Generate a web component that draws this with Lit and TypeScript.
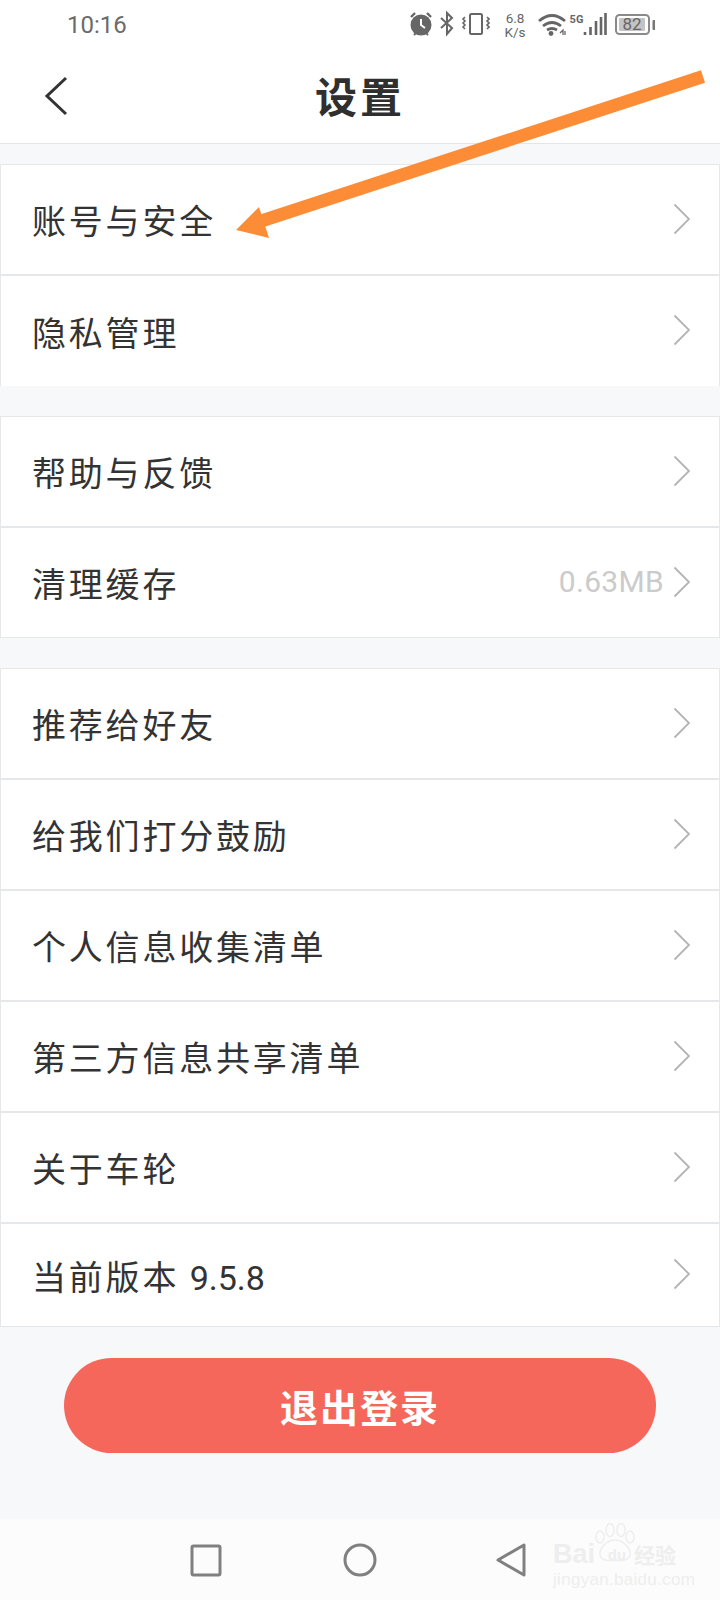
import { LitElement, html, css } from "lit";
import { customElement } from "lit/decorators.js";

const grupos = [
  [{ titulo: "账号与安全" }, { titulo: "隐私管理" }],
  [{ titulo: "帮助与反馈" }, { titulo: "清理缓存", valor: "0.63MB" }],
  [
    { titulo: "推荐给好友" },
    { titulo: "给我们打分鼓励" },
    { titulo: "个人信息收集清单" },
    { titulo: "第三方信息共享清单" },
    { titulo: "关于车轮" },
    { titulo: "当前版本 ", version: "9.5.8" },
  ],
];

@customElement("app-root")
export class AppRoot extends LitElement {
  static styles = css`
    :host {
      display: block;
      position: relative;
      width: 720px;
      height: 1600px;
      overflow: hidden;
      background: #f7f8fa;
      font-family: "Noto Sans CJK SC", "Liberation Sans", sans-serif;
      color: #333;
    }
    .barra-estado {
      height: 50px;
      background: #fff;
      display: flex;
      align-items: center;
      padding: 0 65px 0 67px;
      color: #6a6a6a;
    }
    .hora {
      flex: 1;
      font: 400 24px Roboto, sans-serif;
    }
    .barra-estado svg {
      display: block;
    }
    .velocidad {
      width: 22px;
      margin: 0 12px 0 14px;
      display: flex;
      flex-direction: column;
      align-items: center;
      gap: 1px;
      font: 400 13.500px/13px Roboto, sans-serif;
      color: #666;
    }
    .velocidad span {
      display: block;
      height: 13px;
    }
    .encabezado {
      height: 94px;
      box-sizing: border-box;
      background: #fff;
      border-bottom: 1px solid #e4e5e7;
      display: flex;
      align-items: center;
      justify-content: center;
      position: relative;
      padding-bottom: 4px;
    }
    .encabezado h1 {
      margin: 0;
      font-size: 42px;
      line-height: 60px;
      font-weight: 700;
      letter-spacing: 3px;
      color: #2f2f2f;
    }
    .atras {
      position: absolute;
      left: 44px;
      top: 26px;
    }
    .grupos {
      display: flex;
      flex-direction: column;
      gap: 30px;
      padding-top: 20px;
    }
    .grupo {
      background: #fff;
      border: 1px solid #e6e7e9;
      border-bottom: 0;
    }
    .grupo.con-fondo {
      border-bottom: 1px solid #e6e7e9;
    }
    .fila {
      height: 111px;
      box-sizing: border-box;
      display: flex;
      align-items: center;
      padding: 0 28px 0 31px;
      border-bottom: 2px solid #e6e7e9;
    }
    .fila:last-child {
      height: 110px;
      border-bottom: 0;
    }
    .grupo:nth-child(2) .fila:last-child {
      height: 109px;
    }
    .grupo:nth-child(3) .fila:last-child {
      height: 102px;
    }
    .fila svg {
      margin-bottom: 2px;
    }
    .titulo {
      flex: 1;
      font-size: 34px;
      letter-spacing: 2.800px;
      color: #333;
    }
    .version {
      font: 400 34px Roboto, sans-serif;
      letter-spacing: 0;
    }
    .valor {
      font: 400 30px Roboto, sans-serif;
      letter-spacing: 0.300px;
      color: #cbcbcb;
      margin-right: 9px;
      margin-bottom: 2px;
    }
    .salir {
      display: block;
      box-sizing: border-box;
      width: 592px;
      height: 95px;
      margin: 31px auto 0;
      border: 0;
      border-radius: 48px;
      background: #f6675b;
      color: #fff;
      font-family: inherit;
      font-size: 38px;
      font-weight: 700;
      letter-spacing: 2px;
    }
    .navegacion {
      position: absolute;
      left: 0;
      right: 0;
      bottom: 0;
      height: 81px;
      background: #fcfcfc;
    }
    .navegacion svg {
      display: block;
    }
    .flecha {
      position: absolute;
      left: 0;
      top: 0;
      pointer-events: none;
    }
    .marca {
      position: absolute;
      left: 553px;
      top: 1523px;
      width: 130px;
      color: #eeeeee;
      font-family: "Liberation Sans", "Noto Sans CJK SC", sans-serif;
    }
    .marca .pata {
      display: block;
      margin-left: 41px;
    }
    .marca .nombre {
      display: flex;
      align-items: center;
      margin-top: -20px;
      height: 22px;
      white-space: nowrap;
    }
    .marca .bai {
      width: 47px;
      font-size: 27px;
      font-weight: 700;
    }
    .marca .du {
      width: 34px;
      font-size: 15px;
      font-weight: 700;
      text-align: center;
    }
    .marca .exp {
      font-size: 21px;
      font-weight: 700;
    }
    .marca .sitio {
      font-size: 17px;
      line-height: 20px;
      margin-top: 5px;
      letter-spacing: 0.300px;
      white-space: nowrap;
    }
  `;

  iconosIzquierda() {
    return html`<svg width="81" height="30" viewBox="409 10 81 30">
      <g fill="#666" stroke="#666">
        <circle cx="421" cy="25" r="10.500" stroke="none" />
        <path d="M411 17l4-4M431 17l-4-4" fill="none" stroke-width="2.400" />
        <path d="M421 19v6l4 3" fill="none" stroke="#fff" stroke-width="2" />
        <path d="M414 35l2-2M428 35l-2-2" fill="none" stroke-width="2" />
        <path d="M441 18l11 10-5 6V13l5 5-11 10" fill="none" stroke-width="2" />
        <rect x="470" y="14" width="12" height="20" rx="1.500" fill="none" stroke-width="2" />
        <path d="M465 17l-2 2 2 2-2 2 2 2-2 2 2 2M487 17l2 2-2 2 2 2-2 2 2 2-2 2" fill="none" stroke-width="1.600" />
      </g>
    </svg>`;
  }

  iconosDerecha() {
    return html`<svg width="117" height="30" viewBox="538 10 117 30">
      <g fill="#666" stroke="#666">
        <path d="M539 21q13-11 26 0M543 26q9-7 18 0M547 30q5-3 10 0" fill="none" stroke-width="2.800" />
        <circle cx="551" cy="33.500" r="2.400" stroke="none" />
        <path d="M560 33l3-3v5M565 31v4" fill="none" stroke-width="1.300" />
        <path d="M585 32v3M590.500 27v8M596 21v14M601 17v18M605.500 13v22" fill="none" stroke-width="2.600" />
        <rect x="616" y="15" width="33" height="19" rx="3.500" fill="none" stroke="#8a8a8a" stroke-width="2" />
        <rect x="619" y="18" width="26" height="13" rx="1" fill="#c4c4c4" stroke="none" />
        <rect x="652.500" y="20" width="3" height="10" rx="1" fill="#777" stroke="none" />
      </g>
      <g fill="#666" font-family="Roboto, sans-serif">
        <text x="576.500" y="23" font-size="11" font-weight="700" text-anchor="middle">5G</text>
        <text x="632" y="30" font-size="17" text-anchor="middle">82</text>
      </g>
    </svg>`;
  }

  chevron() {
    return html`<svg width="18" height="32" viewBox="0 0 18 32">
      <path d="M1.500 1.500L16 16 1.500 30.500" fill="none" stroke="#b4b4b4" stroke-width="1.800" />
    </svg>`;
  }

  render() {
    return html`
      <div class="barra-estado">
        <span class="hora">10:16</span>
        ${this.iconosIzquierda()}
        <span class="velocidad"><span>6.8</span><span>K/s</span></span>
        ${this.iconosDerecha()}
      </div>
      <header class="encabezado">
        <svg class="atras" width="26" height="40" viewBox="0 0 26 40">
          <path d="M22 2L3 20l19 18" fill="none" stroke="#333" stroke-width="3" />
        </svg>
        <h1>设置</h1>
      </header>
      <div class="grupos">
        ${grupos.map(
          (grupo, i) => html`
            <section class="grupo ${i > 0 ? "con-fondo" : ""}">
              ${grupo.map(
                (fila) => html`
                  <div class="fila">
                    <span class="titulo">${fila.titulo}${fila.version
                      ? html`<span class="version">${fila.version}</span>`
                      : ""}</span>
                    ${fila.valor ? html`<span class="valor">${fila.valor}</span>` : ""}
                    ${this.chevron()}
                  </div>
                `
              )}
            </section>
          `
        )}
      </div>
      <button class="salir">退出登录</button>
      <nav class="navegacion">
        <svg width="720" height="81" viewBox="0 1519 720 81">
          <g fill="none" stroke="#808080" stroke-width="3" stroke-linejoin="round">
            <rect x="192" y="1546" width="28" height="29" rx="1.500" />
            <circle cx="360" cy="1560" r="15" />
            <path d="M524 1545v30l-26-15z" />
          </g>
        </svg>
      </nav>
      <svg class="flecha" width="720" height="300" viewBox="0 0 720 300">
        <path d="M703 76.500L252 224" stroke="#fd8c36" stroke-width="13" fill="none" />
        <path d="M236 230L259 207 269 238z" fill="#fd8c36" />
      </svg>
      <div class="marca">
        <svg class="pata" width="44" height="40" viewBox="0 0 44 40">
          <g fill="none" stroke="#eeeeee" stroke-width="1.500">
            <ellipse cx="6" cy="14" rx="4" ry="6" />
            <ellipse cx="16" cy="7" rx="4" ry="6.500" />
            <ellipse cx="27" cy="7" rx="4" ry="6.500" />
            <ellipse cx="36" cy="14" rx="4" ry="6" />
            <path d="M21 17c-8 0-16 8-15 15 1 6 9 6 15 5 6 1 14 1 15-5 1-7-7-15-15-15z" />
          </g>
        </svg>
        <div class="nombre">
          <span class="bai">Bai</span><span class="du">du</span><span class="exp">经验</span>
        </div>
        <div class="sitio">jingyan.baidu.com</div>
      </div>
    `;
  }
}
